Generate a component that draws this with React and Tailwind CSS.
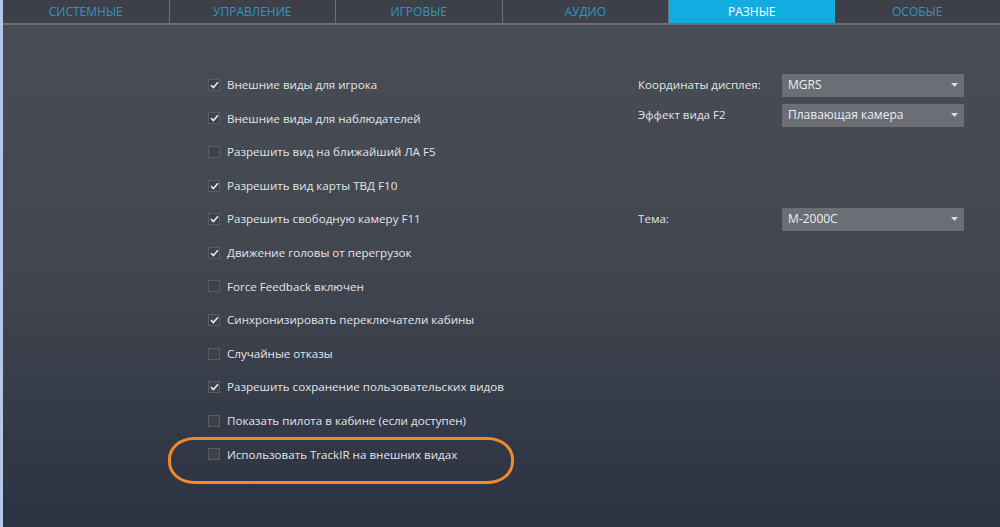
import React from 'react';

const tabs = ["СИСТЕМНЫЕ", "УПРАВЛЕНИЕ", "ИГРОВЫЕ", "АУДИО", "РАЗНЫЕ", "ОСОБЫЕ"];

const options = [
  { label: "Внешние виды для игрока", checked: true },
  { label: "Внешние виды для наблюдателей", checked: true },
  { label: "Разрешить вид на ближайший ЛА F5", checked: false },
  { label: "Разрешить вид карты ТВД F10", checked: true },
  { label: "Разрешить свободную камеру F11", checked: true },
  { label: "Движение головы от перегрузок", checked: true },
  { label: "Force Feedback включен", checked: false },
  { label: "Синхронизировать переключатели кабины", checked: true },
  { label: "Случайные отказы", checked: false },
  { label: "Разрешить сохранение пользовательских видов", checked: true },
  { label: "Показать пилота в кабине (если доступен)", checked: false },
  { label: "Использовать TrackIR на внешних видах", checked: false },
];

const Checkbox = ({ checked }) => (
  <div className="w-[12px] h-[12px] border border-[#585c64] bg-[#3d4149] flex items-center justify-center mr-[7px]">
    {checked && (
      <svg width="9" height="8" viewBox="0 0 9 8">
        <path d="M1 4.2 L3.4 6.5 L8 1.3" fill="none" stroke="#e6e8ec" strokeWidth="1.6" />
      </svg>
    )}
  </div>
);

const Select = ({ value }) => (
  <div className="w-[182px] h-[23px] bg-[#6b6e75] flex items-center justify-between pl-[6px] pr-[6px] text-[12px] text-[#eceef0]">
    <span>{value}</span>
    <svg width="7" height="4" viewBox="0 0 7 4">
      <path d="M0 0 L7 0 L3.5 4 Z" fill="#d8dade" />
    </svg>
  </div>
);

const App = () => {
  return (
    <div className="w-[1000px] h-[527px] flex overflow-hidden" style={{ fontFamily: '"Open Sans", "DejaVu Sans", sans-serif' }}>
      <div className="w-[3px] h-full bg-[#b3c7e6]" />
      <div className="flex-1 flex flex-col bg-linear-to-b from-[#494d56] via-[#42464f] to-[#2b3242] relative">
        {/* Tabs */}
        <div className="flex h-[25px] border-b-[2px] border-[#6c6f76] bg-[#3e4049]">
          {tabs.map((t, i) => (
            <div
              key={t}
              className={
                i === 4
                  ? "flex-1 flex items-center justify-center bg-[#12ade0] text-white text-[12px]"
                  : "flex-1 flex items-center justify-center text-[#2c98c2] text-[12px] " + (i < 4 ? "border-r border-[#6c6f76]" : "")
              }
            >
              {t}
            </div>
          ))}
        </div>

        <div className="flex pt-[43px]">
          {/* Checkboxes */}
          <div className="flex flex-col ml-[205px] w-[430px]">
            {options.map((o) => (
              <div key={o.label} className="h-[33.6px] flex items-center text-[11.6px] text-[#e2e4e8]">
                <Checkbox checked={o.checked} />
                <span>{o.label}</span>
              </div>
            ))}
          </div>

          {/* Selects */}
          <div className="flex flex-col text-[11.6px] text-[#e2e4e8] pt-[2px]">
            <div className="flex items-center h-[30px]">
              <span className="w-[144px]">Координаты дисплея:</span>
              <Select value="MGRS" />
            </div>
            <div className="flex items-center h-[30px]">
              <span className="w-[144px]">Эффект вида F2</span>
              <Select value="Плавающая камера" />
            </div>
            <div className="flex items-center h-[30px] mt-[74px]">
              <span className="w-[144px]">Тема:</span>
              <Select value="M-2000C" />
            </div>
          </div>
        </div>

        {/* Highlight annotation */}
        <div className="absolute left-[165px] top-[437px] w-[346px] h-[47px] border-[3px] border-[#f08a2c] rounded-[26px/22px]" />
      </div>
    </div>
  );
};

export default App;
